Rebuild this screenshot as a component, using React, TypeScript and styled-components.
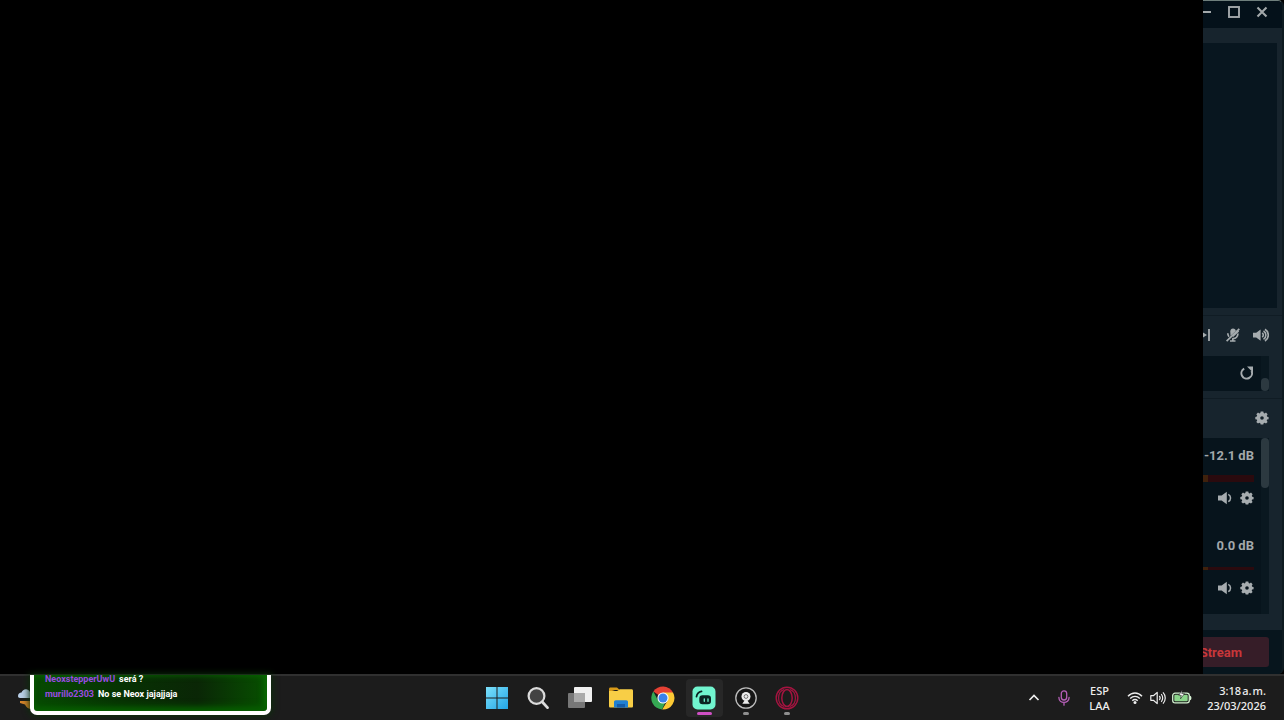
import React from 'react';
import styled, { createGlobalStyle } from 'styled-components';

const GlobalStyle = createGlobalStyle`
  *, *::before, *::after { box-sizing: border-box; }
  body { margin: 0; background: #000; font-family: Roboto, "Liberation Sans", sans-serif; }
  button { font: inherit; color: inherit; border: 0; padding: 0; background: none; cursor: pointer; }
  svg { display: block; }
`;

const Desktop = styled.div`
  display: flex;
  flex-direction: column;
  min-height: 100vh;
  overflow: hidden;
`;

const Workspace = styled.main`
  flex: 1;
  display: flex;
  align-items: stretch;
`;

const Blackout = styled.div`
  flex: 1;
  background: #000;
`;

const AppEdge = styled.aside`
  width: 81px;
  display: flex;
  flex-direction: column;
  overflow: hidden;
  background: #17242d;
  border-top: 1px solid #6f7f7c;
  border-right: 2px solid #0d1a20;
  border-radius: 0 6px 6px 0;
`;

const TitleBar = styled.header`
  display: flex;
  justify-content: flex-end;
  align-items: center;
  gap: 16px;
  height: 27px;
  padding: 0 14px 5px 0;
  background: #04111a;
  color: #a3a8aa;
`;

const IconButton = styled.button<{ $size?: number }>`
  display: flex;
  flex: none;
  align-items: center;
  justify-content: center;
  width: ${(p) => p.$size ?? 12}px;
  height: ${(p) => p.$size ?? 12}px;
`;

const Preview = styled.section`
  flex: 1;
  margin: 15px 5px 0 0;
  background: #08161f;
`;

const Section = styled.section`
  margin-top: 7px;
  border-top: 1px solid #101c24;
  color: #a6acaf;
`;

const Tools = styled.div<{ $height: number }>`
  display: flex;
  justify-content: flex-end;
  align-items: center;
  gap: 12px;
  height: ${(p) => p.$height}px;
  padding: 0 13px 2px 0;
`;

const Panel = styled.div<{ $height: number }>`
  display: flex;
  height: ${(p) => p.$height}px;
  margin-right: 13px;
  background: #07141c;
`;

const PanelBody = styled.div`
  flex: 1;
  min-width: 0;
  padding-right: 7px;
`;

const ScrollTrack = styled.div<{ $end?: boolean }>`
  display: flex;
  flex-direction: column;
  justify-content: ${(p) => (p.$end ? 'flex-end' : 'flex-start')};
  width: 8px;
  background: #0a1820;
`;

const ScrollThumb = styled.div<{ $height: number }>`
  height: ${(p) => p.$height}px;
  border-radius: 4px;
  background: #2c3940;
`;

const SourceRow = styled.div`
  display: flex;
  justify-content: flex-end;
  align-items: center;
  height: 34px;
`;

const Channel = styled.div`
  display: flex;
  flex-direction: column;
  align-items: flex-end;
  height: 90px;
  padding-top: 9px;
`;

const Level = styled.span`
  font-size: 13px;
  line-height: 18px;
  font-weight: 700;
  white-space: nowrap;
  color: #a2a8ab;
`;

const Meter = styled.div<{ $height: number }>`
  display: flex;
  align-items: center;
  width: 100%;
  height: 26px;
  &::before {
    content: '';
    width: 5px;
    height: ${(p) => p.$height}px;
    background: #3f210c;
  }
  &::after {
    content: '';
    flex: 1;
    height: ${(p) => p.$height}px;
    background: #2a0a0e;
  }
`;

const ChannelActions = styled.div`
  display: flex;
  gap: 8px;
`;

const Footer = styled.footer`
  margin-top: 16px;
  padding: 7px 13px 7px 0;
  background: #07151d;
`;

const StreamButton = styled.button`
  display: flex;
  justify-content: flex-end;
  align-items: center;
  width: 100%;
  height: 30px;
  padding-right: 27px;
  overflow: hidden;
  border-radius: 0 3px 3px 0;
  background: #361d28;
  color: #c8373a;
  font-size: 13px;
  font-weight: 700;
`;

const Taskbar = styled.nav`
  position: relative;
  display: grid;
  grid-template-columns: 1fr auto 1fr;
  align-items: center;
  height: 46px;
  background: #1c1c1c;
  border-top: 2px solid #303030;
`;

const Weather = styled.button`
  width: 24px;
  height: 32px;
  margin-left: 16px;
`;

const ChatOverlay = styled.section`
  position: absolute;
  left: 30px;
  top: -1px;
  width: 241px;
  height: 40px;
  padding: 0 11px;
  border: solid #fff;
  border-width: 0 4px 4px;
  border-radius: 0 0 7px 7px;
  background: linear-gradient(90deg, #064a02 0%, #073103 40%, #0a2606 70%, #075000 100%);
  box-shadow: 0 0 7px 1px #0a3009, inset 0 -6px 7px -2px #075c00, inset -3px 0 6px #087000;
`;

const ChatLine = styled.p`
  margin: 0;
  font-size: 9px;
  line-height: 15px;
  font-weight: 700;
  color: #fff;
  white-space: nowrap;
  &:first-child { margin-top: -3px; }
`;

const Author = styled.span`
  margin-right: 4px;
  color: #9a4be0;
`;

const Apps = styled.div`
  display: flex;
  justify-content: space-between;
  width: 328px;
`;

const AppButton = styled.button<{ $active?: boolean; $running?: boolean }>`
  display: flex;
  flex-direction: column;
  align-items: center;
  width: 37px;
  height: 38px;
  padding-top: 7px;
  border-radius: 4px;
  background: ${(p) => (p.$active ? '#272727' : 'transparent')};
  &::after {
    content: '';
    width: ${(p) => (p.$active ? 15 : 6)}px;
    height: 3px;
    margin-top: 2px;
    border-radius: 2px;
    background: ${(p) => (p.$active ? '#cf4fc4' : p.$running ? '#8f8f8f' : 'transparent')};
  }
`;

const Tray = styled.div`
  display: flex;
  justify-content: flex-end;
  align-items: center;
  padding-right: 18px;
  color: #eee;
  font-family: "Noto Sans", "Open Sans", sans-serif;
`;

const TrayText = styled.button<{ $align: string; $width: number }>`
  width: ${(p) => p.$width}px;
  font-size: 11px;
  line-height: 15px;
  font-weight: 500;
  text-align: ${(p) => p.$align};
  white-space: nowrap;
`;

const TrayIcon = styled.button<{ $width: number }>`
  display: flex;
  justify-content: center;
  width: ${(p) => p.$width}px;
`;

const Gear = () => (
  <svg width="14" height="14" viewBox="0 0 14 14">
    <path fill="currentColor" fillRule="evenodd" d="M5.7 0.5h2.6l.4 1.6 .9.4 1.4-.9 1.6 1.7-.8 1.4.4 1 1.4.3v2.2l-1.5.4-.4 1 .9 1.4-1.6 1.6-1.4-.8-1 .4-.3 1.3H5.7l-.4-1.3-1-.4-1.3.8-1.7-1.6.9-1.4-.4-1-1.500-.4V6l1.500-.4.4-1-.9-1.300L3 1.600l1.400.900.900-.400zM7 5.200a1.800 1.800 0 1 0 0 3.600 1.800 1.800 0 0 0 0-3.600z" />
  </svg>
);

const Speaker = () => (
  <svg width="14" height="14" viewBox="0 0 14 14">
    <path fill="currentColor" d="M0 4.6h3.6L8.8.8v12.4L3.6 9.500H0z" />
    <path fill="none" stroke="currentColor" strokeWidth="1.5" d="M10.3 3.4c3 1.5 3 5.7 0 7.2" />
  </svg>
);

const SpeakerLoud = () => (
  <svg width="16" height="14" viewBox="0 0 16 14">
    <path fill="currentColor" d="M0 4.8h3.2L7.6 1.4v11.4L3.2 9.4H0z" />
    <path fill="none" stroke="currentColor" strokeWidth="1.6" d="M9.2 5c1.5 1 1.5 3.2 0 4.2M10.5 3c3.2 1.8 3.2 6.4 0 8.2M12 1.2c4.4 2.7 4.4 9 0 11.8" />
  </svg>
);

const MicOff = () => (
  <svg width="14" height="14" viewBox="0 0 14 14" fill="none" stroke="currentColor" strokeWidth="1.7">
    <path fill="currentColor" stroke="none" d="M4.3 3.4C4.3 1.600 5.400.500 7 .500s2.800 1 2.800 2.500L4.500 8z" />
    <path d="M.6 13.2 13.3.8M1.8 5.2C1.8 7 2.4 8 3 8.800M6.400 10.500c3.200.300 5.200-1.500 5.600-5M6.800 10.200v2.600M4 13h5.500" />
    <path d="m6.500 8.200 6-5.500" strokeWidth="2" />
  </svg>
);

const Wifi = () => (
  <svg width="16" height="14" viewBox="0 0 16 14" fill="none" stroke="currentColor" strokeWidth="1.4">
    <path d="M1 5.3C5 .9 11 .9 15 5.3M3.2 7.6c2.8-3 6.8-3 9.6 0M5.3 9.8c1.6-1.7 3.8-1.7 5.4 0" />
    <circle cx="8" cy="11.6" r="1.5" fill="currentColor" stroke="none" />
  </svg>
);

const Volume = () => (
  <svg width="16" height="16" viewBox="0 0 16 16" fill="none" stroke="currentColor" strokeWidth="1.2" strokeLinejoin="round">
    <path d="M.8 5.7h2.6l3.8-3.3v11.2l-3.8-3.3H.8zM9.3 6c1 1.1 1 2.9 0 4M11.2 4.2c2 2.1 2 5.5 0 7.6M13 2.4c3 3.2 3 8 0 11.2" />
  </svg>
);

const Battery = () => (
  <svg width="20" height="16" viewBox="0 0 20 16">
    <rect x=".7" y="3.2" width="16.6" height="9.600" rx="2.4" fill="none" stroke="#d2f0cf" strokeWidth="1.300" />
    <rect x="2.3" y="4.8" width="13.4" height="6.400" rx="1" fill="#8ad58a" />
    <path d="M18 5.7c1.900.500 1.900 4 0 4.600z" fill="#d8f3d6" />
    <path d="M10.2 0 6.8 5.3h2.5l-.8 3.5 4-5.2H9.8z" fill="#fff" stroke="#1c1c1c" strokeWidth=".6" />
  </svg>
);

const WindowsLogo = () => (
  <svg width="24" height="24" viewBox="0 0 24 24">
    <defs>
      <linearGradient id="win" x1="0" y1="0" x2="1" y2="1" gradientUnits="objectBoundingBox">
        <stop offset="0" stopColor="#7ce0fa" />
        <stop offset="1" stopColor="#22a5e6" />
      </linearGradient>
    </defs>
    <path fill="url(#win)" d="M1 1h10.5v10.5H1zM12.5 1H23v10.5H12.5zM1 12.5h10.5V23H1zM12.5 12.5H23V23H12.5z" />
  </svg>
);

const Search = () => (
  <svg width="24" height="24" viewBox="0 0 24 24">
    <circle cx="10.5" cy="10" r="7.9" fill="#434343" stroke="#dcdcdc" strokeWidth="2.2" />
    <path d="m16.3 16 5.2 5.6" stroke="#dcdcdc" strokeWidth="2.8" strokeLinecap="round" />
  </svg>
);

const TaskView = () => (
  <svg width="24" height="24" viewBox="0 0 24 24">
    <rect x="6" y="1" width="18" height="15" rx="1" fill="#f0f0f0" />
    <rect x="0" y="7" width="17" height="15" rx="1" fill="#777" />
    <path d="M6 7h11v9H6z" fill="#aaa" />
  </svg>
);

const Folder = () => (
  <svg width="24" height="24" viewBox="0 0 24 24">
    <path d="M0 3c0-1 .5-1.6 1.5-1.6H8L10.8 4H6L0 6z" fill="#d79a19" />
    <path d="M0 5h8l3-1.8h11.5c1 0 1.5.6 1.5 1.5V20c0 1-.5 1.5-1.5 1.5h-21C.5 21.500 0 21 0 20z" fill="#f8ce46" />
    <path d="M5 21.500V16c0-1 .7-1.700 1.700-1.700h10.600c1 0 1.700.7 1.700 1.700v5.500z" fill="#2180d2" />
    <path d="M8 18h8v3.500H8z" fill="#155ca9" />
  </svg>
);

const Chrome = () => (
  <svg width="24" height="24" viewBox="0 0 24 24">
    <path d="M12 12 2.300 5.500A11.600 11.600 0 0 1 22 6.500z" fill="#e64134" />
    <path d="M12 6.500h10A11.600 11.600 0 0 1 11.200 23.600L17 14z" fill="#fcc934" />
    <path d="M2.300 5.500 7.100 14.500 14 17l-3 6.600A11.600 11.600 0 0 1 2.300 5.500z" fill="#35a853" />
    <circle cx="12" cy="12" r="5.600" fill="#fff" />
    <circle cx="12" cy="12" r="4.500" fill="#3b82eb" />
  </svg>
);

const Streamlabs = () => (
  <svg width="24" height="24" viewBox="0 0 24 24">
    <rect x=".5" y=".5" width="23" height="23" rx="5" fill="#71f5cf" />
    <rect x="7.300" y="9.300" width="11.700" height="9" rx="3.200" fill="#0b2422" />
    <path d="M4.500 10.600C5 7.400 6.600 5.800 9.500 5.300" fill="none" stroke="#0b2422" strokeWidth="1.800" strokeLinecap="round" />
    <path d="M12.300 13v2.300M16 13v2.300" stroke="#71f5cf" strokeWidth="1.300" strokeLinecap="round" />
  </svg>
);

const Webcam = () => (
  <svg width="24" height="24" viewBox="0 0 24 24">
    <circle cx="12" cy="12" r="10.200" fill="#161616" stroke="#bdbdbd" strokeWidth="1.300" />
    <circle cx="12" cy="10.500" r="4.500" fill="#ededed" />
    <circle cx="12" cy="10.500" r="1.900" fill="#ededed" stroke="#555" strokeWidth=".8" />
    <path d="m10.600 14.500-2.300 3.300h7.400l-2.300-3.300z" fill="#ededed" />
  </svg>
);

const Opera = () => (
  <svg width="24" height="24" viewBox="0 0 24 24" fill="none" stroke="#a51440">
    <circle cx="12" cy="12" r="10.800" strokeWidth="1.400" />
    <ellipse cx="12" cy="12" rx="5.200" ry="8.500" strokeWidth="1.500" />
    <path d="M9 3.500C1.800 6 1.800 18 9 20.500M15 3.500c7.200 2.500 7.200 14.500 0 17" strokeWidth="1.200" />
  </svg>
);

const apps = [
  { name: 'Inicio', Icon: WindowsLogo },
  { name: 'Buscar', Icon: Search },
  { name: 'Vista de tareas', Icon: TaskView },
  { name: 'Explorador de archivos', Icon: Folder },
  { name: 'Chrome', Icon: Chrome },
  { name: 'Streamlabs', Icon: Streamlabs, active: true },
  { name: 'Webcam', Icon: Webcam, running: true },
  { name: 'Opera GX', Icon: Opera, running: true },
];

const channels = [
  { level: '-12.1 dB', meter: 7 },
  { level: '0.0 dB', meter: 3 },
];

const chat = [
  { author: 'NeoxstepperUwU', text: 'será ?' },
  { author: 'murillo2303', text: 'No se Neox jajajjaja' },
];

export default function App() {
  return (
    <Desktop>
      <GlobalStyle />
      <Workspace>
        <Blackout />
        <AppEdge>
          <TitleBar>
            <IconButton aria-label="Minimizar">
              <svg width="12" height="12" viewBox="0 0 12 12"><path d="M1 6h10" stroke="currentColor" strokeWidth="1.800" /></svg>
            </IconButton>
            <IconButton aria-label="Maximizar">
              <svg width="12" height="12" viewBox="0 0 12 12"><rect x="1" y="1" width="10" height="10" fill="none" stroke="currentColor" strokeWidth="1.900" /></svg>
            </IconButton>
            <IconButton aria-label="Cerrar">
              <svg width="12" height="12" viewBox="0 0 12 12"><path d="m1.500 1.500 9 9m0-9-9 9" stroke="currentColor" strokeWidth="2.100" /></svg>
            </IconButton>
          </TitleBar>
          <Preview aria-label="Vista previa" />
          <Section>
            <Tools $height={40}>
              <IconButton $size={16} aria-label="Siguiente">
                <svg width="16" height="14" viewBox="0 0 16 14"><path d="M3 2.500 10 7l-7 4.500z" fill="currentColor" /><path d="M12 1v12" stroke="currentColor" strokeWidth="1.800" /></svg>
              </IconButton>
              <IconButton $size={16} aria-label="Silenciar micrófono"><MicOff /></IconButton>
              <IconButton $size={16} aria-label="Audio"><SpeakerLoud /></IconButton>
            </Tools>
            <Panel $height={35}>
              <PanelBody>
                <SourceRow>
                  <IconButton $size={14} aria-label="Recargar">
                    <svg width="14" height="14" viewBox="0 0 14 14"><path d="M4.200 2.600A5.300 5.300 0 1 0 11.500 5" fill="none" stroke="currentColor" strokeWidth="2" /><path d="M7 .500h6v6z" fill="currentColor" /></svg>
                  </IconButton>
                </SourceRow>
              </PanelBody>
              <ScrollTrack $end><ScrollThumb $height={13} /></ScrollTrack>
            </Panel>
          </Section>
          <Section>
            <Tools $height={39}>
              <IconButton $size={14} aria-label="Ajustes del mezclador"><Gear /></IconButton>
            </Tools>
            <Panel $height={176}>
              <PanelBody>
                {channels.map((c) => (
                  <Channel key={c.level}>
                    <Level>{c.level}</Level>
                    <Meter $height={c.meter} />
                    <ChannelActions>
                      <IconButton $size={14} aria-label="Silenciar"><Speaker /></IconButton>
                      <IconButton $size={14} aria-label="Ajustes"><Gear /></IconButton>
                    </ChannelActions>
                  </Channel>
                ))}
              </PanelBody>
              <ScrollTrack><ScrollThumb $height={50} /></ScrollTrack>
            </Panel>
          </Section>
          <Footer><StreamButton>Stream</StreamButton></Footer>
        </AppEdge>
      </Workspace>
      <Taskbar>
        <Weather aria-label="Clima">
          <svg width="24" height="32" viewBox="0 0 24 32">
            <path d="M2 14c0-2 1.500-3.500 3.500-3.500C6.500 7 12 5.500 14 10v6H4c-1.300 0-2-.8-2-2z" fill="#b9cfe8" />
            <path d="M4 19h12v8c-4 0-6-2-7-4.500L4 21z" fill="#d6842b" />
          </svg>
        </Weather>
        <Apps>
          {apps.map(({ name, Icon, active, running }) => (
            <AppButton key={name} aria-label={name} $active={active} $running={running}><Icon /></AppButton>
          ))}
        </Apps>
        <Tray>
          <TrayIcon $width={30} aria-label="Iconos ocultos">
            <svg width="12" height="12" viewBox="0 0 12 12"><path d="m1.500 8 4.500-4.500L10.500 8" fill="none" stroke="currentColor" strokeWidth="1.700" /></svg>
          </TrayIcon>
          <TrayIcon $width={30} aria-label="Micrófono en uso">
            <svg width="12" height="16" viewBox="0 0 12 16" fill="none" stroke="#b65fb8" strokeWidth="1.300" strokeLinecap="round">
              <rect x="3.300" y=".8" width="5.400" height="9.200" rx="2.700" /><path d="M.9 7.500c0 6.500 10.200 6.500 10.200 0M6 12.500v2.700" />
            </svg>
          </TrayIcon>
          <TrayText $align="center" $width={41}>ESP<br />LAA</TrayText>
          <TrayIcon $width={30} aria-label="Red"><Wifi /></TrayIcon>
          <TrayIcon $width={16} aria-label="Volumen"><Volume /></TrayIcon>
          <TrayIcon $width={32} aria-label="Batería"><Battery /></TrayIcon>
          <TrayText $align="right" $width={68}>3:18{'\u200a'}a.{'\u200a'}m.<br />23/03/2026</TrayText>
        </Tray>
        <ChatOverlay aria-label="Chat">
          {chat.map((m) => (
            <ChatLine key={m.author}><Author>{m.author}</Author>{m.text}</ChatLine>
          ))}
        </ChatOverlay>
      </Taskbar>
    </Desktop>
  );
}
